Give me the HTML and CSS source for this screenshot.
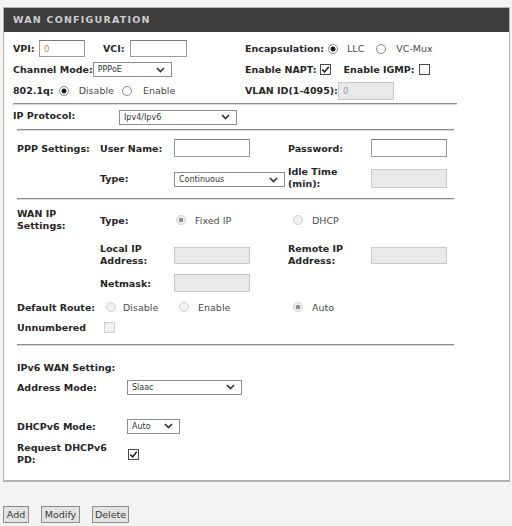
FILE: index.html
```html
<!DOCTYPE html>
<html lang="en">
<head>
  <meta charset="UTF-8" />
  <title>WAN Configuration</title>
  <link rel="stylesheet" href="styles.css">
</head>
<body>
  <div class="panel">
    <div class="panel-head">WAN CONFIGURATION</div>
    <div class="panel-body">

      <div class="row r-top">
        <div class="cell-left">
          <span class="lbl w-vpi">VPI:</span>
          <input class="txt w-46" type="text" value="0">
          <span class="lbl w-vci">VCI:</span>
          <input class="txt w-57" type="text">
        </div>
        <div class="cell-right">
          <span class="lbl">Encapsulation:</span>
          <input class="ml-4" type="radio" name="encap" checked>
          <span class="opt ml-6">LLC</span>
          <input class="ml-12" type="radio" name="encap">
          <span class="opt ml-7">VC-Mux</span>
        </div>
      </div>

      <div class="row r-top">
        <div class="cell-left">
          <span class="lbl">Channel Mode:</span>
          <select class="sel w-79 ml-4"><option>PPPoE</option></select>
        </div>
        <div class="cell-right">
          <span class="lbl">Enable NAPT:</span>
          <input class="ml-3" type="checkbox" checked>
          <span class="lbl ml-10">Enable IGMP:</span>
          <input class="ml-4" type="checkbox">
        </div>
      </div>

      <div class="row r-top">
        <div class="cell-left">
          <span class="lbl">802.1q:</span>
          <input class="ml-5" type="radio" name="vlan" checked>
          <span class="opt ml-7">Disable</span>
          <input class="ml-8" type="radio" name="vlan">
          <span class="opt ml-8">Enable</span>
        </div>
        <div class="cell-right">
          <span class="lbl">VLAN ID(1-4095):</span>
          <input class="txt w-56 h-18 ml-6" type="text" value="0" disabled>
        </div>
      </div>

      <hr class="sep sep-wide">

      <div class="row r-ip">
        <span class="lbl w-106">IP Protocol:</span>
        <select class="sel w-118 sel-low"><option>Ipv4/Ipv6</option></select>
      </div>

      <hr class="sep sep-narrow">

      <div class="row indent r-ppp1">
        <span class="lbl c1">PPP Settings:</span>
        <span class="lbl c2">User Name:</span>
        <div class="c3"><input class="txt w-76 h-18" type="text"></div>
        <span class="lbl c4">Password:</span>
        <input class="txt w-76 h-18" type="text">
      </div>

      <div class="row indent r-ppp2">
        <span class="c1"></span>
        <span class="lbl c2">Type:</span>
        <div class="c3"><select class="sel w-111 sel-low"><option>Continuous</option></select></div>
        <span class="lbl c4 two">Idle Time<br>(min):</span>
        <input class="txt w-76 h-19" type="text" disabled>
      </div>

      <hr class="sep sep-narrow mt-9">

      <div class="row indent r-wtype">
        <span class="lbl c1 two">WAN IP<br>Settings:</span>
        <span class="lbl c2">Type:</span>
        <div class="c3">
          <input class="ml-2" type="radio" name="wtype" checked disabled>
          <span class="opt ml-6">Fixed IP</span>
        </div>
        <div class="c4">
          <input type="radio" name="wtype" disabled>
          <span class="opt ml-6">DHCP</span>
        </div>
      </div>

      <div class="row indent r-local">
        <span class="c1"></span>
        <span class="lbl c2 two">Local IP<br>Address:</span>
        <div class="c3"><input class="txt w-76 h-17" type="text" disabled></div>
        <span class="lbl c4 two">Remote IP<br>Address:</span>
        <input class="txt w-76 h-17" type="text" disabled>
      </div>

      <div class="row indent r-net">
        <span class="c1"></span>
        <span class="lbl c2">Netmask:</span>
        <input class="txt w-76 h-18" type="text" disabled>
      </div>

      <div class="row indent r-route">
        <span class="lbl c1b">Default Route:</span>
        <div class="c2b">
          <input type="radio" name="route" disabled>
          <span class="opt ml-4">Disable</span>
        </div>
        <div class="c3">
          <input type="radio" name="route" disabled>
          <span class="opt ml-6">Enable</span>
        </div>
        <div class="c4">
          <input type="radio" name="route" checked disabled>
          <span class="opt ml-6">Auto</span>
        </div>
      </div>

      <div class="row indent r-unnum">
        <span class="lbl c1">Unnumbered</span>
        <input type="checkbox" disabled>
      </div>

      <hr class="sep sep-narrow mt-7">

      <div class="row indent r-v6title">
        <span class="lbl">IPv6 WAN Setting:</span>
      </div>

      <div class="row indent">
        <span class="lbl c-v6">Address Mode:</span>
        <select class="sel w-115"><option>Slaac</option></select>
      </div>

      <div class="row indent r-dhcp6">
        <span class="lbl c-v6">DHCPv6 Mode:</span>
        <select class="sel w-53"><option>Auto</option></select>
      </div>

      <div class="row indent r-pd">
        <span class="lbl c-v6 two">Request DHCPv6<br>PD:</span>
        <input class="ml-1" type="checkbox" checked>
      </div>

    </div>
  </div>

  <div class="actions">
    <button class="btn b-add">Add</button>
    <button class="btn b-modify">Modify</button>
    <button class="btn b-delete">Delete</button>
  </div>
</body>
</html>
```

FILE: styles.css
```css
body {
  margin: 0;
  background: #f3f3f3;
  font-family: "DejaVu Sans", Verdana, sans-serif;
  color: #2a2a2a;
}

.panel {
  margin: 7px 2px 0 3px;
  border: 1px solid #b2b2b2;
  border-bottom-width: 2px;
  background: #fff;
}

.panel-head {
  height: 24px;
  line-height: 24px;
  padding-left: 9px;
  background: #3d3d3d;
  color: #cdcdcd;
  font-size: 9.5px;
  font-weight: bold;
  letter-spacing: 1.2px;
}

.panel-body {
  padding: 6px 0 13px 9px;
}

.row {
  display: flex;
  align-items: center;
  height: 20px;
}

.indent { padding-left: 4px; }

.r-top { height: 21px; }
.r-ip { height: 21px; }
.r-ppp1 { margin-top: 7px; }
.r-ppp2 { height: 22px; margin-top: 9px; }
.r-wtype { height: 26px; margin-top: 7px; }
.r-local { height: 26px; margin-top: 9px; }
.r-net { margin-top: 5px; }
.r-route { margin-top: 4px; }
.r-v6title { margin-top: 11px; }
.r-dhcp6 { margin-top: 19px; }
.r-pd { height: 26px; margin-top: 5px; }

.cell-left {
  display: flex;
  align-items: center;
  width: 232px;
}

.cell-right {
  display: flex;
  align-items: center;
}

.lbl {
  font-size: 9.5px;
  font-weight: bold;
  color: #262626;
  white-space: nowrap;
}

.lbl.two { line-height: 12px; }

.opt {
  font-size: 9.5px;
  color: #4a4a4a;
}

.w-vpi { width: 26px; }
.w-vci { width: 27px; margin-left: 18px; }
.w-106 { width: 106px; }

.c1 { width: 83px; flex: none; }
.c2 { width: 74px; flex: none; }
.c3 { width: 114px; flex: none; display: flex; align-items: center; }
.c4 { width: 83px; flex: none; display: flex; align-items: center; }
.c1b { width: 84px; flex: none; }
.c2b { width: 73px; flex: none; display: flex; align-items: center; }
.c-v6 { width: 110px; flex: none; }

.ml-1 { margin-left: 1px; }
.ml-2 { margin-left: 2px; }
.ml-3 { margin-left: 3px; }
.ml-4 { margin-left: 4px; }
.ml-5 { margin-left: 5px; }
.ml-6 { margin-left: 6px; }
.ml-7 { margin-left: 7px; }
.ml-8 { margin-left: 8px; }
.ml-10 { margin-left: 10px; }
.ml-12 { margin-left: 12px; }
.mt-7 { margin-top: 7px !important; }
.mt-9 { margin-top: 9px !important; }

/* text inputs */
.txt {
  box-sizing: border-box;
  height: 17px;
  margin: 0;
  padding: 0 4px;
  border: 1px solid #9c9c9c;
  border-top-color: #7a7a7a;
  background: #fff;
  font-family: "DejaVu Sans", sans-serif;
  font-size: 8.5px;
  color: #c08a2a;
}

.txt:disabled {
  border-color: #c9c9c9;
  background: #e9e9e9;
  color: #9a9a9a;
}

.w-46 { width: 46px; }
.w-56 { width: 56px; }
.w-57 { width: 57px; }
.w-76 { width: 76px; }
.h-17 { height: 17px; }
.h-18 { height: 18px; }
.h-19 { height: 19px; }

/* selects */
.sel {
  appearance: none;
  box-sizing: border-box;
  height: 15px;
  margin: 0;
  padding: 0 0 0 4px;
  border: 1px solid #8e8e8e;
  border-radius: 0;
  background: #fff url("data:image/svg+xml,%3Csvg xmlns='http://www.w3.org/2000/svg' viewBox='0 0 9 6'%3E%3Cpath d='M1 1l3.5 3.5L8 1' fill='none' stroke='%23333' stroke-width='1.7'/%3E%3C/svg%3E") no-repeat right 6px center / 9px 6px;
  font-family: "DejaVu Sans", sans-serif;
  font-size: 8px;
  color: #333;
}

.sel-low { margin-top: 3px; }
.w-53 { width: 53px; }
.w-79 { width: 79px; }
.w-111 { width: 111px; }
.w-115 { width: 115px; }
.w-118 { width: 118px; }

/* radios and checkboxes */
input[type="radio"] {
  appearance: none;
  flex: none;
  width: 10px;
  height: 10px;
  margin-top: 0;
  margin-bottom: 0;
  border: 1px solid #8a8a8a;
  border-radius: 50%;
  background: #fff;
}

input[type="radio"]:checked {
  background: radial-gradient(circle, #1e1e1e 0 2.2px, #fff 2.8px);
}

input[type="radio"]:disabled {
  border-color: #cfcfcf;
  background: #f1f1f1;
}

input[type="radio"]:disabled:checked {
  background: radial-gradient(circle, #8a8a8a 0 2px, #f1f1f1 2.6px);
}

input[type="checkbox"] {
  appearance: none;
  flex: none;
  width: 11px;
  height: 11px;
  margin-top: 0;
  margin-bottom: 0;
  border: 1px solid #4a4a4a;
  background: #fff;
}

input[type="checkbox"]:checked {
  background: #fff url("data:image/svg+xml,%3Csvg xmlns='http://www.w3.org/2000/svg' viewBox='0 0 9 9'%3E%3Cpath d='M1.3 4.6l2.3 2.3 4.2-5.2' fill='none' stroke='%23222' stroke-width='1.6'/%3E%3C/svg%3E") no-repeat center / 9px 9px;
}

input[type="checkbox"]:disabled {
  border-color: #cfcfcf;
  background: #f1f1f1;
}

/* separators */
.sep {
  height: 0;
  margin: 0;
  border: 0;
  border-top: 1px solid #8c8c8c;
  border-bottom: 1px solid #dadada;
  border-left: 1px solid #8c8c8c;
}

.sep-wide {
  width: 443px;
  margin-top: 2px;
}

.sep-narrow {
  width: 436px;
  margin-left: 4px;
  margin-top: 3px;
}

/* buttons */
.actions {
  display: flex;
  gap: 12px;
  margin-top: 24px;
  padding-left: 3px;
}

.btn {
  box-sizing: border-box;
  height: 17px;
  padding: 0;
  border: 1px solid #8c8c8c;
  background: #e3e3e3;
  font-family: "DejaVu Sans", sans-serif;
  font-size: 9.5px;
  color: #3a3a3a;
}

.b-add { width: 26px; }
.b-modify { width: 39px; }
.b-delete { width: 37px; }
```
